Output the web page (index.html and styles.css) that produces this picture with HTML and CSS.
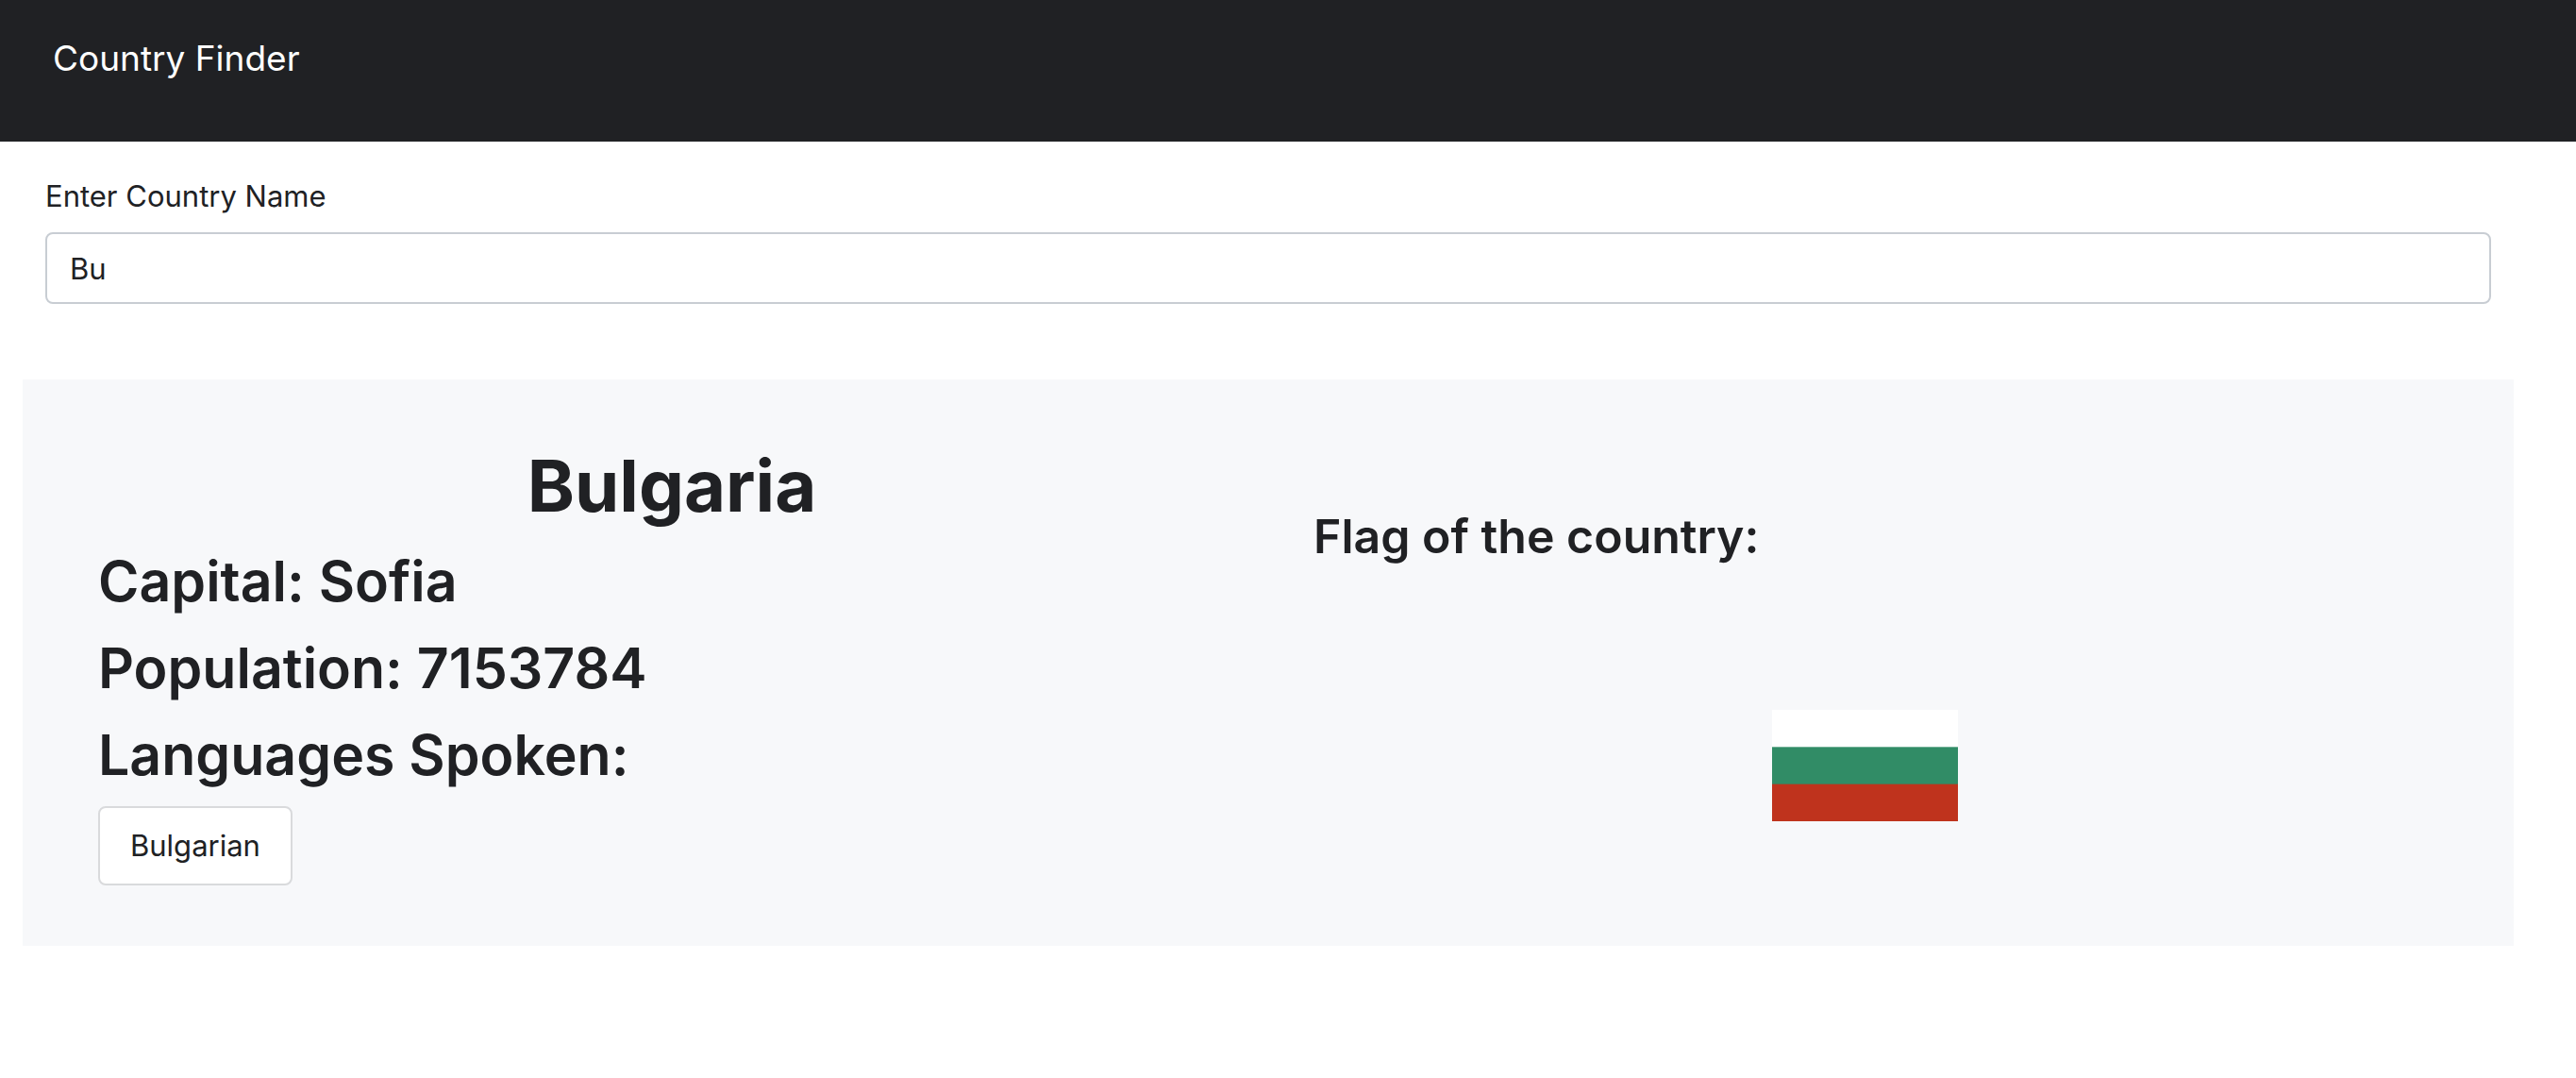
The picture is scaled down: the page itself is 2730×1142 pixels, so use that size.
FILE: index.html
```html
<!DOCTYPE html>
<html lang="en">
<head>
<meta charset="utf-8">
<meta name="viewport" content="width=device-width, initial-scale=1">
<title>Country Finder</title>
<link rel="stylesheet" href="styles.css">
</head>
<body>
<header class="navbar">
  <a class="navbar-brand" href="#">Country Finder</a>
</header>
<main class="page">
  <form class="search">
    <label class="search-label" for="country">Enter Country Name</label>
    <input class="search-input" id="country" type="text" value="Bu" autocomplete="off">
  </form>
  <section class="country">
    <div class="country-info">
      <h1 class="country-name">Bulgaria</h1>
      <h2 class="fact">Capital: Sofia</h2>
      <h2 class="fact">Population: 7153784</h2>
      <h2 class="fact">Languages Spoken:</h2>
      <ul class="languages">
        <li class="language">Bulgarian</li>
      </ul>
    </div>
    <div class="country-flag">
      <h3 class="flag-title">Flag of the country:</h3>
      <svg class="flag" viewBox="0 0 5 3" preserveAspectRatio="none" role="img" aria-label="Flag of Bulgaria">
        <rect width="5" height="3" fill="#fff"/>
        <rect y="1" width="5" height="2" fill="#318c66"/>
        <rect y="2" width="5" height="1" fill="#bf331d"/>
      </svg>
    </div>
  </section>
</main>
</body>
</html>
```
FILE: styles.css
```css
* {
  box-sizing: border-box;
}

body {
  margin: 0;
  background: #fff;
  color: #202124;
  font-family: Inter, "Liberation Sans", sans-serif;
  font-size: 31px;
  line-height: 48px;
}

h1,
h2,
h3 {
  margin: 0 0 16px;
}

.navbar {
  padding: 32px 56px 58px;
  background: #202124;
}

.navbar-brand {
  display: block;
  color: #fff;
  font-size: 37px;
  line-height: 60px;
  text-decoration: none;
}

.page {
  padding: 34px 66px 32px 24px;
}

.search {
  display: flex;
  flex-direction: column;
  gap: 14px;
  padding: 0 24px;
}

.search-input {
  width: 100%;
  height: 76px;
  padding: 12px 24px;
  border: 2px solid #c8cdd3;
  border-radius: 8px;
  background: #fff;
  color: inherit;
  font: inherit;
}

.search-input:focus {
  outline: none;
}

.country {
  display: grid;
  grid-template-columns: 1fr 1fr;
  gap: 48px;
  margin-top: 80px;
  padding: 64px 80px;
  background: #f7f8fa;
}

.country-name {
  font-size: 76px;
  font-weight: 700;
  line-height: 96px;
  text-align: center;
}

.fact {
  font-size: 59px;
  font-weight: 600;
  line-height: 76px;
}

.languages {
  display: flex;
  gap: 16px;
  margin: 0;
  padding: 0;
  list-style: none;
}

.language {
  padding: 16px 32px;
  border: 2px solid #d9dadc;
  border-radius: 8px;
  background: #fff;
}

.country-flag {
  display: flex;
  flex-direction: column;
  align-items: center;
  padding-top: 68px;
}

.flag-title {
  align-self: stretch;
  padding: 0 24px;
  font-size: 50px;
  font-weight: 600;
  line-height: 68px;
}

.flag {
  width: 197px;
  height: 118px;
  margin-top: 134px;
}
```
